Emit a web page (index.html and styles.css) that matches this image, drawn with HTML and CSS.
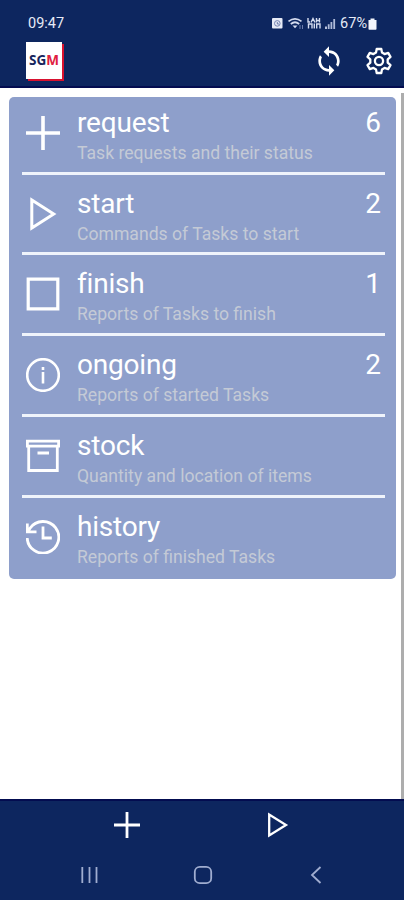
FILE: index.html
```html
<!DOCTYPE html>
<html lang="en">
<head>
<meta charset="utf-8">
<meta name="viewport" content="width=device-width, initial-scale=1">
<title>SGM</title>
<link rel="stylesheet" href="styles.css">
</head>
<body>
<header class="header">
  <div class="status">
    <span class="time">09:47</span>
    <svg class="status-icons" width="64" height="14" viewBox="0 0 64 14" fill="none" stroke="#d5dcef">
      <rect x="0" y="2" width="10.500" height="10.500" rx="1" fill="#e6eaf6" stroke="none"/>
      <circle cx="5.300" cy="7.400" r="2.800" stroke="#7382b0"/>
      <path d="M5.300 6v2H7" stroke="#52659b" stroke-width=".8"/>
      <path d="M16.500 5.300q6.500-5 13 0M18.800 8q4.200-3.500 8.400 0" stroke-width="1.700"/>
      <path d="M20.500 9.500h5L23 12.300z" fill="#d5dcef" stroke="none"/>
      <path d="M28 9v4M30.500 9v4" stroke-width="1" stroke="#6c7cac"/>
      <path d="M36 2v4h2M39 6.500l2-4 2 4M44.500 2v4.500M47.500 2v4.500M44.500 4.500h3M36.500 12.500V8h3.500v4.500M42.300 7.500v5M44.700 12.500V8h3.300v4.500" stroke-width="1.400"/>
      <path d="M54 13v-2.500" stroke-width="1.700"/>
      <path d="M56.700 13V8.300M59.400 13V6M62.200 13V3" stroke-width="1.800" stroke="#aebad8"/>
    </svg>
    <span class="percent">67%</span>
    <svg class="battery" width="9" height="13" viewBox="0 0 9 13"><path d="M2.500 1.500h4V3h2v9q0 .8-.8.8H1.300q-.8 0-.8-.8V3h2z" fill="#f3f5fb"/></svg>
  </div>
  <div class="appbar">
    <div class="logo">SG<span class="logo-red">M</span></div>
    <svg class="sync" width="32" height="32" viewBox="0 0 24 24" fill="#fff"><path d="M12 4V1L8 5l4 4V6c3.310 0 6 2.690 6 6 0 1.010-.25 1.970-.7 2.800l1.460 1.460C19.540 15.030 20 13.570 20 12c0-4.420-3.580-8-8-8zm0 14c-3.310 0-6-2.690-6-6 0-1.010.25-1.970.7-2.800L5.240 7.740C4.460 8.970 4 10.430 4 12c0 4.420 3.580 8 8 8v3l4-4-4-4v3z"/></svg>
    <svg class="gear" width="28" height="28" viewBox="0 0 28 28" fill="none" stroke="#fff" stroke-width="2.300" stroke-linejoin="round">
      <path d="M11.700 2h4.600l.7 3.600 2.500 1.450 3.700-1.200 2.300 4-2.800 2.500v3.300l2.800 2.500-2.300 4-3.700-1.200-2.500 1.450-.7 3.600h-4.600l-.7-3.600-2.500-1.450-3.700 1.200-2.300-4 2.800-2.500v-3.300l-2.800-2.500 2.300-4 3.700 1.200L11 5.600z"/>
      <circle cx="14" cy="14" r="4.100"/>
    </svg>
  </div>
</header>
<main class="content">
  <ul class="card">
    <li class="row">
      <svg class="icon" viewBox="0 0 34 34"><path d="M17 0v34M0 17h34" stroke-width="3.600"/></svg>
      <div class="text"><div class="title">request</div><div class="sub">Task requests and their status</div></div>
      <span class="count">6</span>
    </li>
    <li class="row">
      <svg class="icon" viewBox="0 0 34 34"><path d="M5.800 3v28L27.700 17z" stroke-width="3"/></svg>
      <div class="text"><div class="title">start</div><div class="sub">Commands of Tasks to start</div></div>
      <span class="count">2</span>
    </li>
    <li class="row">
      <svg class="icon" viewBox="0 0 34 34"><path d="M2.200 2.200h29.600v29.600H2.200z" stroke-width="3.200"/></svg>
      <div class="text"><div class="title">finish</div><div class="sub">Reports of Tasks to finish</div></div>
      <span class="count">1</span>
    </li>
    <li class="row">
      <svg class="icon" viewBox="0 0 34 34"><circle cx="17" cy="17" r="15.800" stroke-width="2.600"/><path d="M17 14V25.500M17 9v3" stroke-width="2.600"/></svg>
      <div class="text"><div class="title">ongoing</div><div class="sub">Reports of started Tasks</div></div>
      <span class="count">2</span>
    </li>
    <li class="row">
      <svg class="icon" viewBox="0 0 34 34"><path d="M1.400 2.200h31.200v5H1.400zM2.700 7.200v24.300h28.600V7.200M11.500 14h11.500" stroke-width="2.800"/></svg>
      <div class="text"><div class="title">stock</div><div class="sub">Quantity and location of items</div></div>
    </li>
    <li class="row">
      <svg class="icon" viewBox="0 0 34 34"><path d="M1.200 18A15.800 15.800 0 1 0 4 8.300L2.500 10.700M1.300 3.500v8.300H10.500M17 6.500V18h8.800" stroke-width="2.800"/></svg>
      <div class="text"><div class="title">history</div><div class="sub">Reports of finished Tasks</div></div>
    </li>
  </ul>
  <div class="scrollbar"></div>
</main>
<footer class="footer">
  <div class="actions">
    <svg width="26" height="26" viewBox="0 0 26 26" fill="none" stroke="#fff" stroke-width="2.800"><path d="M13 0v26M0 13h26"/></svg>
    <svg width="26" height="26" viewBox="0 0 26 26" fill="none" stroke="#fff" stroke-width="2.300"><path d="M4.200 2.500v21L21 13z"/></svg>
  </div>
  <div class="nav">
    <svg width="20" height="20" viewBox="0 0 20 20" fill="none" stroke="#a0add0" stroke-width="1.800"><path d="M2.300 2v16M9.500 2v16M16.500 2v16"/></svg>
    <svg width="20" height="20" viewBox="0 0 20 20" fill="none" stroke="#a0add0" stroke-width="1.800"><rect x="1.800" y="1.800" width="16.400" height="16.400" rx="5"/></svg>
    <svg width="20" height="20" viewBox="0 0 20 20" fill="none" stroke="#a0add0" stroke-width="1.800"><path d="M14.500 2L6 10l8.500 8"/></svg>
  </div>
</footer>
</body>
</html>
```
FILE: styles.css
```css
* { box-sizing: border-box; }
body {
  margin: 0;
  height: 900px;
  display: flex;
  flex-direction: column;
  background: #fff;
  font-family: Roboto, "Liberation Sans", sans-serif;
  overflow: hidden;
}
.header {
  height: 88px;
  background: #0d265f;
  border-bottom: 2px solid #030c50;
  color: #fff;
}
.status {
  height: 40px;
  padding: 6px 27px 0 28px;
  display: flex;
  align-items: center;
  font-size: 14.500px;
  color: #e6eaf6;
}
.time { margin-right: auto; }
.percent { margin-left: 4px; }
.battery { margin-left: 1px; }
.appbar {
  padding: 0 11px 0 26px;
  display: flex;
  align-items: center;
  height: 42px;
}
.logo {
  width: 36px;
  height: 37px;
  margin: -2px auto 0 0;
  background: #fff;
  box-shadow: 2px 2px 0 #d8122f;
  color: #17255c;
  font: 700 13.500px/37px "Open Sans", sans-serif;
  text-align: center;
}
.logo-red { color: #e02040; }
.sync { margin-right: 20px; }
.content {
  flex: 1;
  display: flex;
  align-items: flex-start;
  padding: 9px 0 0 9px;
}
.card {
  width: 387px;
  height: 482px;
  margin: 0;
  padding: 0 11px 0 13px;
  list-style: none;
  background: #8e9fcb;
  border-radius: 5px;
}
.row {
  height: 80.700px;
  display: flex;
  align-items: flex-start;
  color: #fff;
  border-bottom: 3px solid #eff3fb;
  padding: 22px 4px 0;
}
.row:first-child { height: 77.800px; padding-top: 19px; }
.row:last-child { border: 0; height: auto; }
.icon {
  width: 34px;
  height: 34px;
  margin-right: 17px;
  fill: none;
  stroke: #fff;
}
.text { margin-top: -10px; flex: 1; }
.title {
  font-size: 28px;
  line-height: 34px;
  letter-spacing: -.2px;
}
.sub {
  font-size: 17.600px;
  line-height: 22px;
  margin-top: 2px;
  color: #c4cad6;
  white-space: nowrap;
}
.count { font-size: 28px; line-height: 34px; margin-top: -10px; }
.scrollbar {
  width: 3px;
  align-self: stretch;
  margin: -4px 0 0 auto;
  background: #adadad;
}
.footer {
  height: 101px;
  background: #0d265f;
  border-top: 2px solid #030c50;
}
.actions {
  display: flex;
  justify-content: space-between;
  padding: 11px 113px 0 114px;
}
.nav {
  display: flex;
  justify-content: space-between;
  padding: 27px 78px 0 80px;
}
```
